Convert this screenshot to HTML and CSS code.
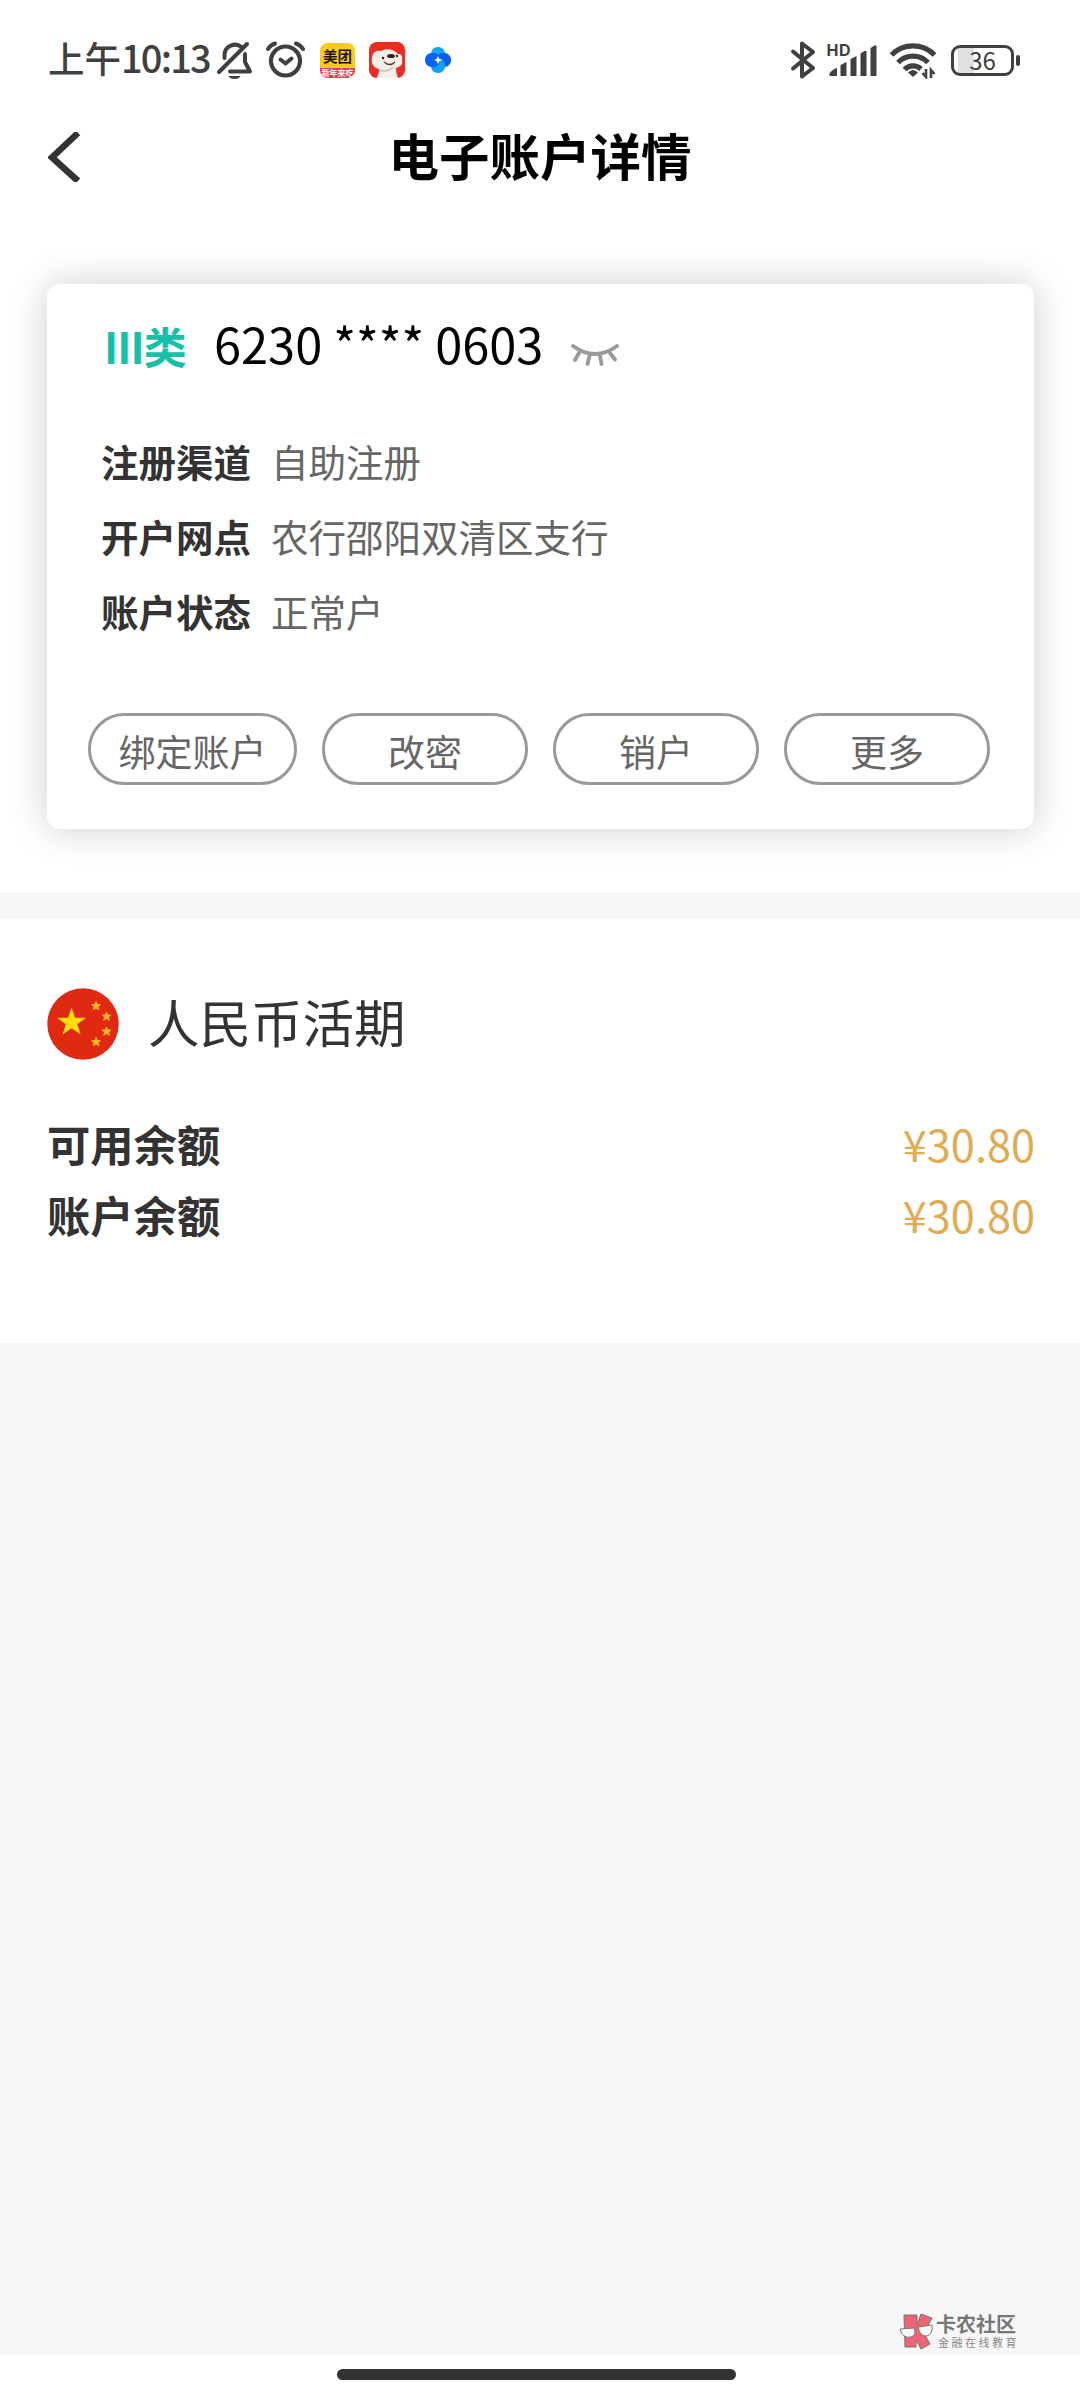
FILE: index.html
```html
<!DOCTYPE html>
<html lang="zh-CN">
<head>
<meta charset="utf-8">
<title>电子账户详情</title>
<link rel="stylesheet" href="styles.css">
</head>
<body>
<div class="screen">
  <div class="status">
    <span class="clock">上午<span class="digits">10:13</span></span>
    <svg class="ic bell" width="38" height="40" viewBox="217 40 38 40" fill="none" stroke="#404040" stroke-width="4" stroke-linecap="round" stroke-linejoin="round">
      <path d="M225.500 58V54.500a10.500 10.500 0 0 1 17-7.500M246 54v8l5 9.500H231"/><path d="M220 72L248 44"/><path d="M229.500 76h12a6.200 4 0 0 1-12 0z" fill="#404040" stroke="none"/>
    </svg>
    <svg class="ic alarm" width="40" height="40" viewBox="266 40 40 40" fill="none" stroke="#404040" stroke-linecap="round" stroke-linejoin="round">
      <circle cx="286.500" cy="61" r="14.500" stroke-width="4.200"/><path d="M281.500 59.500l5 4 6-5" stroke-width="4"/><path d="M269 49q2.500-4 7-5.500M304 49q-2.500-4-7-5.500" stroke-width="4"/>
    </svg>
    <div class="meituan"><span class="mt-name">美团</span><span class="mt-sub">新年来吃</span></div>
    <svg class="ic dog" width="38" height="38" viewBox="0 0 38 38">
      <rect x="1" y="1" width="36" height="36" rx="8" fill="#ee2b20"/>
      <path d="M9 37c1-5 3-6 2-9-6-1-8-6-7-12 1-5 4-7 9-6 6-3 13-2 17 3 3 0 5 2 4 6 1 5-2 7-6 8 0 4 1 7 2 10z" fill="#f6eee8"/>
      <path d="M11 29c5 2 10 1 15-3" stroke="#d7c9c2" stroke-width="2" fill="none"/>
      <ellipse cx="23" cy="15" rx="4" ry="2" fill="#30221f"/><circle cx="15" cy="17" r="1.300" fill="#30221f"/><circle cx="29" cy="15" r="1.200" fill="#30221f"/>
      <path d="M16 21q6 5 11 0" stroke="#513d39" stroke-width="1.500" fill="none"/>
    </svg>
    <svg class="ic flower" width="26" height="26" viewBox="0 0 26 26">
      <rect x="6" y="0" width="14" height="15" rx="6.500" fill="#14a5f8"/><rect x="11" y="6" width="15" height="14" rx="6.500" fill="#0a5cf0"/>
      <rect x="6" y="11" width="14" height="15" rx="6.500" fill="#12a0f6"/><rect x="0" y="6" width="15" height="14" rx="6.500" fill="#0a62f2"/>
      <path d="M13 9l1.300 2.700L17 13l-2.700 1.300L13 17l-1.300-2.700L9 13l2.700-1.300z" fill="#fff"/>
    </svg>
    <svg class="ic bluetooth" width="28" height="40" viewBox="789 40 28 40" fill="none" stroke="#404040" stroke-width="4" stroke-linecap="round" stroke-linejoin="round">
      <path d="M793 51.500L813 68 802 76.500V43.500L813 52 793 68.500"/>
    </svg>
    <svg class="ic signal" width="52" height="40" viewBox="827 40 52 40" fill="#404040">
      <path d="M829.500 73.500q3-4.500 7.500-5.500v8h-6q-2.500-.5-1.500-2.500zM840.500 65l6-3v14h-6zM850.500 59l6-3v20h-6zM860.500 53.500l4-2.500h2v25h-6zM870.500 48l4-2.500h2v30.500h-6z"/>
      <text class="hd" x="826.500" y="56" textLength="24">HD</text>
    </svg>
    <svg class="ic wifi" width="48" height="38" viewBox="889 41 48 38" fill="none" stroke="#404040" stroke-width="5.200">
      <path d="M891.500 55a30 30 0 0 1 43 0M898 62.500a21 21 0 0 1 30 0M904.500 69.500a12 12 0 0 1 16.500-.5"/>
      <path d="M908 72.500q5-5 10 0l-5 4.500z" fill="#404040" stroke="none"/>
      <path d="M926 69v8l-3.500-4M931 78v-8l3.500 4" stroke-width="2.600"/>
    </svg>
    <div class="battery"><span class="level">36</span></div>
  </div>

  <header class="header">
    <svg class="back" width="34" height="50" viewBox="48 132 34 50" fill="none" stroke="#333" stroke-width="6.500"><path d="M78 133L52 157.500 78 181"/></svg>
    <h1 class="title">电子账户详情</h1>
  </header>

  <section class="card">
    <div class="card-head">
      <span class="type">III类</span>
      <span class="number">6230 **** 0603</span>
      <svg class="eye" width="48" height="23" viewBox="0 0 48 23" fill="none" stroke="#999" stroke-width="3.800" stroke-linecap="round">
        <path d="M2 3Q24 19 46 3M8 10L4 17M18.500 13L16.500 21M29 13L30.500 21M39 10L44 16.500"/>
      </svg>
    </div>
    <dl class="info">
      <div class="info-row"><dt>注册渠道</dt><dd>自助注册</dd></div>
      <div class="info-row"><dt>开户网点</dt><dd>农行邵阳双清区支行</dd></div>
      <div class="info-row"><dt>账户状态</dt><dd>正常户</dd></div>
    </dl>
    <div class="actions">
      <button class="btn btn-wide">绑定账户</button>
      <button class="btn">改密</button>
      <button class="btn">销户</button>
      <button class="btn">更多</button>
    </div>
  </section>

  <section class="balance">
    <div class="currency">
      <svg class="flag" width="72" height="72" viewBox="0 0 72 72">
        <circle cx="36" cy="36" r="35.700" fill="#df2910"/>
        <path d="M24.500 19.500l3.500 10.300h11l-8.800 6.500 3.500 10.200-9.200-6.200-9 6.200 3.300-10.200-8.800-6.500h11z" fill="#ffde00"/>
        <g fill="#f8b522" stroke="#f8b522" stroke-width="1">
          <path id="star" d="M49 13.500l1.200 2.900 3.200.2-2.500 2 .9 3.200-2.800-1.800-2.800 1.800.9-3.200-2.500-2 3.200-.2z"/>
          <use href="#star" x="10.500" y="10.500"/><use href="#star" x="10.500" y="25.500"/><use href="#star" y="36"/>
        </g>
      </svg>
      <span class="currency-name">人民币活期</span>
    </div>
    <div class="line"><span class="label">可用余额</span><span class="amount">¥30.80</span></div>
    <div class="line"><span class="label">账户余额</span><span class="amount">¥30.80</span></div>
  </section>

  <div class="filler">
    <div class="brand">
      <svg width="34" height="37" viewBox="0 0 34 37">
        <path d="M5 2h13v10l4-11 11 4-8 15 6 11-9 5-5-9v7H6z" fill="#ef6475" stroke="#777" stroke-width="1"/>
        <path d="M1 16l14-1q3 7-3 9-8 2-11-8zM19 14l14-2q1 9-5 11-7 1-9-9z" fill="#f7f7f7" stroke="#777" stroke-width="1"/>
      </svg>
      <div class="brand-text"><span class="brand-name">卡农社区</span><span class="brand-sub">金融在线教育</span></div>
    </div>
  </div>
  <div class="navbar"><div class="handle"></div></div>
</div>
</body>
</html>
```
FILE: styles.css
```css
* { box-sizing: border-box; margin: 0; padding: 0; }
body { width: 1080px; background: #fff; font-family: "Noto Sans CJK SC", sans-serif; color: #333; }
svg { display: block; flex: none; }
.screen { display: flex; flex-direction: column; height: 2400px; white-space: nowrap; }

.status { display: flex; align-items: center; height: 120px; padding-left: 48px; flex: none; }
.clock { width: 168px; font-size: 36.500px; font-weight: 500; line-height: 50px; color: #404040; margin-top: -5px; }
.digits { font-size: 38px; letter-spacing: -1.800px; }
.alarm { margin-left: 11px; }
.meituan { display: flex; flex-direction: column; width: 35px; height: 35px; margin-left: 15px; border-radius: 8px; overflow: hidden; background: #fbcb16; text-align: center; }
.mt-name { height: 25px; font-size: 14.500px; font-weight: 700; line-height: 25px; color: #1c1503; }
.mt-sub { height: 10px; font-size: 8px; font-weight: 700; line-height: 9px; background: #e23b50; color: #fff; }
.dog { margin-left: 13px; }
.flower { margin-left: 19px; }
.bluetooth { margin-left: 338px; }
.signal { margin-left: 10px; }
.hd { font: 700 16px "Inter", sans-serif; }
.wifi { margin-left: 10px; }
.battery { position: relative; width: 63px; height: 31px; margin-left: 14px; border: 3px solid #404040; border-radius: 9px; background: linear-gradient(90deg, transparent 4px, #e0e0e0 4px, #e0e0e0 20px, transparent 20px); }
.battery::after { content: ""; position: absolute; right: -9px; top: 7px; width: 4px; height: 11px; border-radius: 2px; background: #404040; }
.level { display: block; font-size: 24px; line-height: 23px; text-align: center; color: #404040; }

.header { display: flex; align-items: center; height: 68px; padding-left: 48px; flex: none; }
.back { margin-top: 6px; }
.title { flex: 1; margin-right: 82px; text-align: center; font-size: 50.500px; font-weight: 700; line-height: 68px; color: #000; }

.card { display: flex; flex-direction: column; flex: none; width: 987px; height: 545px; margin: 96px 0 0 47px; padding: 24px 44px 0 41px; border-radius: 13px; background: #fff; box-shadow: 0 0 38px rgba(0, 0, 0, .2); }
.card-head { display: flex; align-items: baseline; height: 70px; padding-left: 16px; line-height: 70px; }
.type { width: 110px; font-size: 43px; font-weight: 700; letter-spacing: -.900px; color: #18bfa7; }
.number { width: 357px; font-size: 48.750px; color: #000; }
.eye { position: relative; top: 2px; }
.info { margin-top: 45px; padding-left: 13px; }
.info-row { display: flex; height: 75px; font-size: 37.500px; line-height: 75px; }
dt { width: 170px; font-weight: 700; }
dd { color: #666; }
.actions { display: flex; justify-content: space-between; margin-top: 64.500px; }
.btn { width: 206px; height: 72px; border: 3px solid #999; border-radius: 36px; background: #fff; font: 37px/66px "Noto Sans CJK SC", sans-serif; color: #666; padding-top: 2px; }
.btn-wide { width: 209px; }

.balance { flex: none; height: 451px; margin-top: 63px; padding: 96px 46px 0 47px; border-top: 27px solid #f7f7f7; }
.currency { display: flex; align-items: center; height: 72px; margin-top: -27px; margin-bottom: 48px; }
.currency-name { margin: -7px 0 0 29px; font-size: 51.500px; line-height: 70px; }
.line { display: flex; justify-content: space-between; height: 71px; line-height: 71px; font-size: 43.300px; }
.label { font-weight: 700; }
.amount { margin-right: -1px; color: #dfab55; }

.filler { display: flex; flex: 1; flex-direction: column; justify-content: flex-end; align-items: flex-end; padding: 0 63px 5px 0; background: #f7f7f7; }
.brand { display: flex; width: 118px; gap: 3px; }
.brand-text { display: flex; flex-direction: column; padding-top: 1px; }
.brand-name { height: 21px; font-size: 20px; font-weight: 700; line-height: 20px; color: #777; }
.brand-sub { padding-left: 2px; font-size: 11px; letter-spacing: 2.500px; line-height: 14px; color: #888; }
.navbar { flex: none; height: 45px; padding: 14px 0 0 337px; }
.handle { width: 399px; height: 11px; border-radius: 5.500px; background: #333; }
```
